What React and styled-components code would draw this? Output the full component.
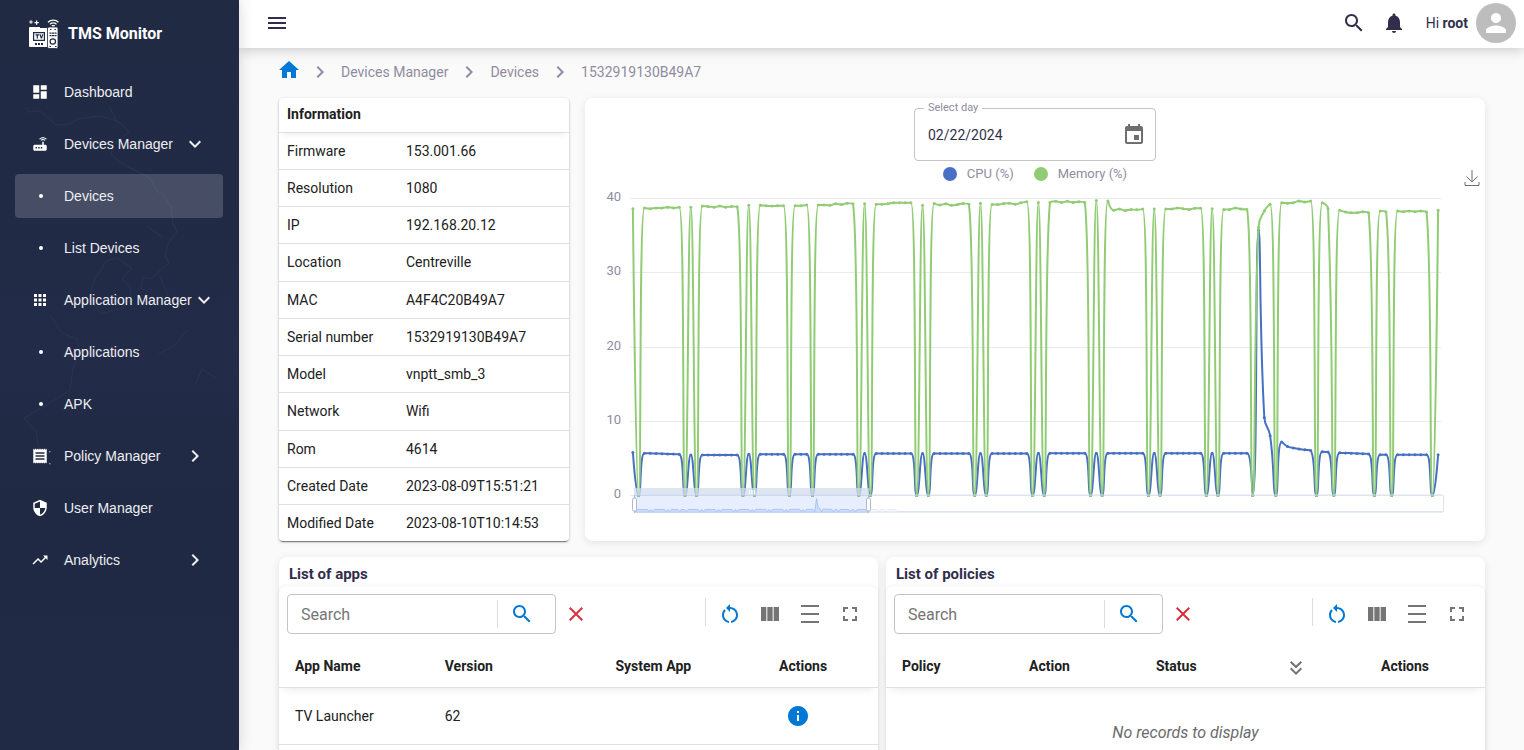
import React from "react";
import styled, { createGlobalStyle } from "styled-components";

const GlobalStyle = createGlobalStyle`
  *, *::before, *::after { box-sizing: border-box; }
  body { margin: 0; background: #fafafa; color: #212121; font: 14px/20px Roboto, "Liberation Sans", sans-serif; }
  button, input { font: inherit; color: inherit; }
  a { color: inherit; text-decoration: none; }
`;

/* ---------- icons ---------- */

const PATHS = {
  menu: "M3 18h18v-2H3v2zm0-5h18v-2H3v2zm0-7v2h18V6H3z",
  search:
    "M15.5 14h-.79l-.28-.27C15.41 12.59 16 11.11 16 9.5 16 5.91 13.09 3 9.5 3S3 5.91 3 9.5 5.91 16 9.5 16c1.61 0 3.09-.59 4.23-1.57l.27.28v.79l5 4.99L20.49 19l-4.99-5zm-6 0C7.01 14 5 11.99 5 9.5S7.01 5 9.5 5 14 7.01 14 9.5 11.99 14 9.5 14z",
  bell: "M12 22c1.1 0 2-.9 2-2h-4c0 1.1.89 2 2 2zm6-6v-5c0-3.07-1.64-5.64-4.5-6.32V4c0-.83-.67-1.5-1.5-1.5s-1.5.67-1.5 1.5v.68C7.63 5.36 6 7.92 6 11v5l-2 2v1h16v-1l-2-2z",
  person:
    "M12 12c2.21 0 4-1.79 4-4s-1.79-4-4-4-4 1.79-4 4 1.79 4 4 4zm0 2c-2.67 0-8 1.34-8 4v2h16v-2c0-2.66-5.33-4-8-4z",
  home: "M10 20v-6h4v6h5v-8h3L12 3 2 12h3v8z",
  chevronRight: "M10 6 8.59 7.41 13.17 12l-4.58 4.59L10 18l6-6z",
  chevronDown: "M16.59 8.59 12 13.17 7.41 8.59 6 10l6 6 6-6z",
  dashboard: "M3 13h8V3H3v10zm0 8h8v-6H3v6zm10 0h8V11h-8v10zm0-18v6h8V3h-8z",
  router:
    "M20.2 5.9l.8-.8C19.6 3.7 17.8 3 16 3s-3.6.7-5 2.1l.8.8C13 4.8 14.5 4.2 16 4.2s3 .6 4.2 1.7zm-.9.8c-.9-.9-2.1-1.4-3.3-1.4s-2.4.5-3.3 1.4l.8.8c.7-.7 1.6-1 2.5-1s1.8.3 2.5 1l.8-.8zM19 13h-2V9h-2v4H5c-1.1 0-2 .9-2 2v4c0 1.1.9 2 2 2h14c1.1 0 2-.9 2-2v-4c0-1.1-.9-2-2-2zM8 18H6v-2h2v2zm3.5 0h-2v-2h2v2zm3.5 0h-2v-2h2v2z",
  apps: "M4 8h4V4H4v4zm6 12h4v-4h-4v4zm-6 0h4v-4H4v4zm0-6h4v-4H4v4zm6 0h4v-4h-4v4zm6-10v4h4V4h-4zm-6 4h4V4h-4v4zm6 6h4v-4h-4v4zm0 6h4v-4h-4v4z",
  receipt:
    "M18 17H6v-2h12v2zm0-4H6v-2h12v2zm0-4H6V7h12v2zM3 22l1.5-1.5L6 22l1.5-1.5L9 22l1.5-1.5L12 22l1.5-1.5L15 22l1.5-1.5L18 22l1.5-1.5L21 22V2l-1.5 1.5L18 2l-1.5 1.5L15 2l-1.5 1.5L12 2l-1.5 1.5L9 2 7.5 3.5 6 2 4.5 3.5 3 2v20zM24.500 7h1.300v-1.300h-1.300zM24.500 23h1.300v-1.300h-1.300z",
  shield:
    "M12 1L3 5v6c0 5.55 3.84 10.74 9 12 5.16-1.26 9-6.45 9-12V5l-9-4zm0 10.990h7c-.53 4.120-3.280 7.790-7 8.940V12H5V6.300l7-3.110v8.800z",
  trending: "M16 6l2.290 2.290-4.880 4.880-4-4L2 16.590 3.410 18l6-6 4 4 6.300-6.290L22 12V6z",
  event:
    "M17 12h-5v5h5v-5zM16 1v2H8V1H6v2H5c-1.110 0-1.990.9-1.990 2L3 19c0 1.100.89 2 2 2h14c1.100 0 2-.9 2-2V5c0-1.100-.9-2-2-2h-1V1h-2zm3 18H5V8h14v11z",
  close: "M19 6.410 17.590 5 12 10.590 6.410 5 5 6.410 10.590 12 5 17.590 6.410 19 12 13.410 17.590 19 19 17.590 13.410 12z",
  restart:
    "M12 5V2L8 6l4 4V7c3.310 0 6 2.690 6 6 0 2.970-2.170 5.430-5 5.910v2.020c3.950-.49 7-3.850 7-7.930 0-4.420-3.580-8-8-8zm-6 8c0-1.650.67-3.150 1.760-4.240L6.340 7.340C4.900 8.790 4 10.790 4 13c0 4.080 3.050 7.440 7 7.930v-2.020c-2.830-.48-5-2.940-5-5.910z",
  columns: "M14.670 5v14H9.330V5h5.340zm1 14H21V5h-5.330v14zm-7.340 0V5H3v14h5.330z",
  density: "M3 3h18v2H3zm0 16h18v2H3zm0-8h18v2H3z",
  fullscreen: "M7 14H5v5h5v-2H7v-3zm-2-4h2V7h3V5H5v5zm12 7h-3v2h5v-5h-2v3zM14 5v2h3v3h2V5h-5z",
  doubleDown: "M18 6.410 16.590 5 12 9.580 7.410 5 6 6.410l6 6zM18 13l-1.410-1.410L12 16.170l-4.590-4.580L6 13l6 6z",
  info: "M12 2C6.480 2 2 6.480 2 12s4.480 10 10 10 10-4.480 10-10S17.520 2 12 2zm1 15h-2v-6h2v6zm0-8h-2V7h2v2z",
};

const Glyph = styled.svg`
  display: block;
  flex: none;
  fill: currentColor;
  overflow: visible;
`;

const Icon = ({ name, size = 24 }) => (
  <Glyph width={size} height={size} viewBox="0 0 24 24" aria-hidden="true">
    <path d={PATHS[name]} />
  </Glyph>
);

const Logo = () => (
  <Glyph width="32" height="32" viewBox="0 0 32 32" aria-hidden="true">
    <circle cx="3" cy="4" r="1.700" opacity=".75" />
    <path d="M8 2.500h1.200V4h1.500v1.200H9.200v1.500H8V5.200H6.500V4H8z" />
    <path d="M2 9h18.500v20H2a1 1 0 0 1-1-1V10a1 1 0 0 1 1-1z" />
    <g fill="none" stroke="#fff">
      <path d="M20 4.200c3-2.800 7.500-2.800 10.500 0M22 6.200c2-1.600 4.500-1.600 6.500 0" strokeWidth="1.300" />
    </g>
    <path d="M23.800 7h3v1.500h-3z" />
    <g fill="#202a44">
      <path d="M12 9h7v1h-7zM19 8h2v4h-2z" />
      <path d="M5 14h12v9H5zm1.200 1.200v6.600h9.600v-6.600z" fillRule="evenodd" />
      <path d="M7.500 16.300h3.600v1.200H9.900v3H8.700v-3H7.500zM11.400 16.300h1.300l.7 2.500.7-2.500h1.300l-1.400 4.200h-1.200zM7 25h2v2H7zM10 25h2v2h-2zM13 25h2v2h-2z" />
    </g>
    <rect x="19.500" y="9" width="10.500" height="21.500" rx="1.500" stroke="#202a44" strokeWidth=".8" />
    <g fill="#202a44">
      <path d="M22 11h1.500v1H22zM26.500 11H28v1h-1.500zM21.500 14.500h2v1.300h-2zM24 14.500h2v1.300h-2zM26.500 14.500h2v1.300h-2zM21.500 17h2v1.300h-2zM24 17h2v1.300h-2zM26.500 17h2v1.300h-2zM21.500 28h1.500v1h-1.500zM27 28h1.500v1H27z" />
    </g>
    <circle cx="24.800" cy="23.500" r="2.700" fill="none" stroke="#202a44" strokeWidth="1.200" />
  </Glyph>
);

/* ---------- shell ---------- */

const Shell = styled.div`
  display: flex;
  height: 100vh;
  overflow: hidden;
`;

const Sidebar = styled.aside`
  position: relative;
  z-index: 3;
  flex: none;
  width: 239px;
  padding-top: 13px;
  background: linear-gradient(#202a43, #222b47 48%, #1f2943 70%, #202a44);
  color: #eeeef2;
  box-shadow: 0 0 14px rgba(0, 0, 0, 0.16);
  font-family: "Liberation Sans", Arial, sans-serif;
`;

const MapArt = styled.svg`
  position: absolute;
  inset: 0;
  width: 100%;
  height: 100%;
  fill: none;
  stroke: #38486a;
  stroke-opacity: 0.32;
  pointer-events: none;
`;

const Brand = styled.a`
  position: relative;
  display: flex;
  align-items: center;
  gap: 8px;
  height: 41px;
  padding-left: 28px;
  margin-bottom: 16px;
  color: #fff;
  font: bold 16px/20px Roboto, sans-serif;
`;

const Nav = styled.nav`
  position: relative;
  display: flex;
  flex-direction: column;
  gap: 8px;
  padding: 0 16px 0 15px;
`;

const NavLink = styled.a`
  display: flex;
  align-items: center;
  height: 44px;
  padding-left: 16px;
  border-radius: 4px;
  white-space: nowrap;
  background: ${(p) => (p.$active ? "rgba(255, 255, 255, 0.17)" : "transparent")};
`;

const NavIcon = styled.span`
  display: flex;
  width: 18px;
  margin-right: 15px;
  justify-content: center;
  color: #fff;
`;

const Dot = styled.i`
  width: 4px;
  height: 4px;
  margin-left: 2px;
  border-radius: 50%;
  background: #fff;
`;

const NavText = styled.span`
  min-width: 119px;
`;

const Main = styled.div`
  display: flex;
  flex: 1;
  flex-direction: column;
  min-width: 0;
`;

const TopBar = styled.header`
  position: relative;
  z-index: 2;
  display: flex;
  flex: none;
  align-items: center;
  height: 48px;
  padding: 0 8px 2px 26px;
  background: #fff;
  color: #312e4b;
  box-shadow: 0 2px 12px rgba(0, 0, 0, 0.2);
`;

const IconButton = styled.button`
  display: flex;
  align-items: center;
  justify-content: center;
  flex: none;
  width: ${(p) => p.$w || 40}px;
  height: ${(p) => p.$h || 40}px;
  padding: 0;
  border: 0;
  background: none;
  color: ${(p) => p.$color || "inherit"};
  cursor: pointer;
`;

const Account = styled.div`
  display: flex;
  align-items: center;
  gap: 8px;
  margin-left: 12px;
`;

const Avatar = styled.span`
  display: flex;
  align-items: center;
  justify-content: center;
  width: 40px;
  height: 40px;
  border-radius: 50%;
  background: #bdbdbd;
  color: #fff;
`;

const Spacer = styled.div`
  flex: 1;
`;

const Content = styled.main`
  flex: 1;
  min-height: 0;
  overflow-y: auto;
  scrollbar-width: none;
  padding: 0 39px 16px 40px;
`;

const Crumbs = styled.nav`
  display: flex;
  align-items: center;
  gap: 9px;
  height: 50px;
  padding-bottom: 2px;
  color: #8f8c9f;
`;

const HomeLink = styled.a`
  width: 20px;
  padding-bottom: 4px;
  display: flex;
  justify-content: center;
  color: #0078d4;
`;

/* ---------- cards ---------- */

const Overview = styled.section`
  display: grid;
  grid-template-columns: 290px minmax(0, 1fr);
  gap: 16px;
  margin-bottom: 16px;
`;

const InfoCard = styled.div`
  border-radius: 4px;
  background: #fff;
  box-shadow: 0 2px 1px -1px rgba(0, 0, 0, 0.4), 0 1px 3px rgba(0, 0, 0, 0.28);
`;

const InfoTable = styled.table`
  width: 100%;
  height: 100%;
  border-collapse: collapse;
  text-align: left;

  th, td { padding: 0 8px; font-weight: 400; border-bottom: 1px solid #e0e0e0; }
  thead tr { height: 34px; box-shadow: 0 6px 6px -4px rgba(0, 0, 0, 0.09); }
  thead th { font-weight: 700; padding-bottom: 1px; }
  tbody th { width: 41%; }
  tbody tr:last-child > * { border-bottom: 0; }
`;

const Card = styled.div`
  border-radius: 8px;
  background: #fff;
  box-shadow: 0 2px 8px rgba(0, 0, 0, 0.09);
`;

const ChartCard = styled(Card)`
  padding-top: 4px;
`;

const DayField = styled.fieldset`
  display: flex;
  width: 242px;
  height: 59px;
  margin: 0 auto;
  padding: 0 1px 2px 9px;
  border: 1px solid #c4c4c4;
  border-radius: 4px;
`;

const DayLegend = styled.legend`
  padding: 0 4px;
  color: #8f8c9f;
  font-size: 11px;
  line-height: 12px;
`;

const DayRow = styled.div`
  display: flex;
  align-items: center;
  width: 100%;
  height: 40px;
  padding-top: 2px;
`;

const DayInput = styled.input`
  flex: 1;
  min-width: 0;
  padding: 0 4px;
  border: 0;
  outline: 0;
  background: none;
  color: #312e4b;
`;

const ChartBar = styled.div`
  display: grid;
  grid-template-columns: 1fr auto 1fr;
  height: 26px;
`;

const Series = styled.ul`
  grid-column: 2;
  display: flex;
  align-items: center;
  gap: 20px;
  margin: 0;
  padding: 0;
  list-style: none;
  color: #8f8c9f;
  font-size: 13px;
`;

const SeriesItem = styled.li`
  display: flex;
  align-items: center;
  gap: 10px;

  &::before {
    content: "";
    width: 14px;
    height: 14px;
    border-radius: 50%;
    background: ${(p) => p.$color};
  }
`;

const SaveSlot = styled.div`
  display: flex;
  justify-content: flex-end;
  align-items: flex-end;
  padding-right: 4px;
`;

const ChartSvg = styled.svg`
  display: block;
  width: 100%;
  height: auto;
  font-family: Roboto, sans-serif;
`;

/* ---------- chart data ---------- */

const DROPS = [1, 9, 11, 19, 21, 27, 31, 39, 41, 49, 51, 59, 61, 69, 71, 79, 81, 89, 91, 99, 101, 107, 111, 118, 121, 128, 131, 138];

const MEMORY_RUNS = [
  [38.6], [38.7, 38.6, 38.7, 38.7, 38.8, 38.7, 38.8], [38.8],
  [38.95, 38.9, 38.8, 38.95, 38.8, 38.9, 38.85], [39.05],
  [39.05, 39, 38.95, 39, 39], [39, 39, 39.1],
  [39.1, 39.1, 39.05, 39.25, 39.15, 39.35, 39.25], [39.25],
  [39.2, 39.2, 39.25, 39.4, 39.4, 39.4, 39.4], [39.05],
  [39.3, 39.1, 39.25, 39.05, 39.15, 39.3, 39.2], [39.35],
  [39.15, 39.15, 39.3, 39.35, 39.2, 39.4, 39.55], [39.45],
  [39.45, 39.6, 39.45, 39.6, 39.45, 39.55, 39.45], [39.7],
  [39.65, 38.4, 38.55, 38.35, 38.5, 38.45, 38.55], [38.55],
  [38.55, 38.55, 38.7, 38.6, 38.5, 38.65, 38.65], [38.6],
  [38.5, 38.5, 38.7, 38.55, 38.5], [36.1, 38.3, 39.2],
  [39.4, 39.35, 39.4, 39.65, 39.5, 39.65], [39.4, 38.6],
  [38.4, 38.15, 38.05, 38.05, 38.2, 38.05], [38.3, 38.2],
  [38.3, 38.2, 38.3, 38.2, 38.3, 38.15], [38.4],
];

const CPU_EVENTS = { 0: 5.8, 108: 35.7, 109: 10.5, 110: 8.05, 112: 7.2, 113: 6.6, 114: 6.4, 115: 6.25, 116: 6.15, 117: 6.05, 119: 5.9, 120: 5.85 };

const MEMORY = MEMORY_RUNS.flatMap((run, i) => (i < DROPS.length ? [...run, 0] : run));

const cpuBase = (i) => {
  if (i < 9) return 5.75 - i * 0.025;
  if (i < 20) return 5.45;
  if (i < 40) return 5.55;
  if (i < 70) return 5.65;
  if (i < 122) return 5.7;
  if (i < 128) return 5.75 - (i - 122) * 0.03;
  return 5.5;
};

const CPU = MEMORY.map((m, i) => (m === 0 ? 0 : CPU_EVENTS[i] ?? cpuBase(i)));

const STEP = 811 / 140;
const BASE = 308.5;
const toPoint = (v, i) => [45 + STEP * (i + 0.5), BASE - v * 7.43];

const clamp = (v, a, b) => Math.max(Math.min(v, Math.max(a, b)), Math.min(a, b));

/* Bezier smoothing whose control points never leave the range of their segment. */
const smoothPath = (pts) => {
  let d = `M${pts[0][0]} ${pts[0][1]}`;
  let [c0x, c0y] = pts[0];
  for (let i = 1; i < pts.length; i += 1) {
    const [px, py] = pts[i - 1];
    const [x, y] = pts[i];
    let c1x = x;
    let c1y = y;
    let n0x = x;
    let n0y = y;
    if (i < pts.length - 1) {
      const [nx, ny] = pts[i + 1];
      const lenPrev = Math.hypot(x - px, y - py);
      const lenNext = Math.hypot(nx - x, ny - y);
      const ratio = lenNext / (lenNext + lenPrev);
      n0x = clamp(x + (nx - px) * 0.5 * ratio, nx, x);
      n0y = clamp(y + (ny - py) * 0.5 * ratio, ny, y);
      c1x = clamp(x - ((n0x - x) * lenPrev) / lenNext, px, x);
      c1y = clamp(y - ((n0y - y) * lenPrev) / lenNext, py, y);
      n0x = x + ((x - c1x) * lenNext) / lenPrev;
      n0y = y + ((y - c1y) * lenNext) / lenPrev;
    }
    d += `C${[c0x, c0y, c1x, c1y, x, y].map((n) => n.toFixed(2)).join(" ")}`;
    c0x = n0x;
    c0y = n0y;
  }
  return d;
};

const OVERVIEW = [...CPU, ...CPU.slice(22, 38)]
  .map((v, i) => `L${(49 + i * 1.69).toFixed(1)} ${(324.5 - v * 0.36).toFixed(1)}`)
  .join("");
const OVERVIEW_LINE = `M49 322.5${OVERVIEW}L313 324.500L858 324.5`;

const Line = ({ values, color }) => {
  const pts = values.map(toPoint);
  return (
    <g>
      <path d={smoothPath(pts)} fill="none" stroke={color} strokeWidth="2" strokeLinejoin="bevel" />
      {pts.map(([x, y], i) => (
        <circle key={i} cx={x} cy={y} r="1.500" fill={color} />
      ))}
    </g>
  );
};

const Handle = ({ x }) => (
  <g stroke="#acb8d1">
    <path d={`M${x} 308v18`} />
    <rect x={x - 2} y="311" width="4" height="13" rx="1.500" fill="#fff" />
  </g>
);

const UsageChart = () => (
  <ChartSvg viewBox="0 0 900 354" role="img" aria-label="CPU and memory usage">
    {[0, 10, 20, 30, 40].map((v) => {
      const y = Math.floor(BASE - v * 7.43 + 0.2);
      return (
        <g key={v}>
          <path d={`M45 ${y + 0.5}H856`} stroke="#e8eaee" />
          <text x="36" y={y + 3} textAnchor="end" fontSize="13" fill="#8f8c9f">{v}</text>
        </g>
      );
    })}
    <Line values={CPU} color="#4770c4" />
    <Line values={MEMORY} color="#91cc75" />
    <path d={`${OVERVIEW_LINE}V326H49Z`} fill="#d2dbee" fillOpacity=".2" />
    <path d={OVERVIEW_LINE} fill="none" stroke="#d2dbee" strokeWidth=".5" />
    <rect x="49.500" y="308" width="809" height="17" rx="1" fill="none" stroke="#d2dbee" strokeOpacity=".8" />
    <rect x="49" y="308" width="235" height="18" fill="#87afff" fillOpacity=".2" />
    <clipPath id="window"><rect x="49" y="300" width="235" height="26" /></clipPath>
    <g clipPath="url(#window)">
      <path d={`${OVERVIEW_LINE}V326H49Z`} fill="#8fb0f7" fillOpacity=".2" />
      <path d={OVERVIEW_LINE} fill="none" stroke="#8fb0f7" strokeWidth=".5" />
    </g>
    <rect x="49" y="301" width="235" height="7" fill="#d2dbee" fillOpacity=".75" />
    <path d="M164.500 303v4M167 303v4M169.500 303v4" stroke="#fff" strokeWidth="1.300" />
    <Handle x={49.5} />
    <Handle x={283.5} />
  </ChartSvg>
);

/* ---------- lists ---------- */

const Lists = styled.section`
  display: grid;
  grid-template-columns: repeat(2, minmax(0, 1fr));
  gap: 8px;
`;

const PanelTitle = styled.h2`
  height: 29px;
  margin: 0;
  padding: 7px 10px 0;
  color: #312e4b;
  font-size: 15px;
  line-height: 20px;
`;

const PanelBody = styled.div`
  min-height: 220px;
  border-radius: 8px;
  background: #fff;
  box-shadow: 0 0 4px rgba(0, 0, 0, 0.08);
`;

const Toolbar = styled.div`
  display: flex;
  align-items: center;
  padding: 8px 8px 0;
`;

const SearchBox = styled.div`
  display: flex;
  align-items: center;
  width: 269px;
  height: 40px;
  border: 1px solid #c4c4c4;
  border-radius: 4px;
`;

const SearchInput = styled.input`
  flex: 1;
  min-width: 0;
  padding: 2px 13px 0;
  border: 0;
  outline: 0;
  background: none;
  font-size: 16px;

  &::placeholder { color: #757575; opacity: 1; }
`;

const Rule = styled.i`
  width: 1px;
  height: 28px;
  background: #dcdcdc;
`;

const SearchGo = styled.div`
  width: 57px;
  display: flex;
  padding-left: 4px;
`;

const Tools = styled.div`
  display: flex;
  align-items: center;
  color: #757575;
`;

const RuleSlot = styled.span`
  display: flex;
  padding: 0 4px 4px 0;
`;

const DataTable = styled.table`
  width: 100%;
  margin-top: 11px;
  table-layout: fixed;
  border-collapse: collapse;
`;

const HeadRow = styled.tr`
  height: 42px;
  box-shadow: 0 8px 8px -6px rgba(0, 0, 0, 0.1);
`;

const HeadCell = styled.th`
  width: ${(p) => p.$w};
  padding: ${(p) => (p.$center ? "0" : "0 0 0 16px")};
  border-bottom: 1px solid #e0e0e0;
  text-align: ${(p) => (p.$center ? "center" : "left")};
`;

const Cell = styled.td`
  height: 57px;
  padding: ${(p) => (p.$center ? "0 10px 0 0" : "0 0 0 16px")};
  border-bottom: 1px solid #e0e0e0;
`;

const Centered = styled.div`
  display: flex;
  justify-content: center;
  padding-top: ${(p) => p.$top || 0}px;
  color: #757575;
`;

const Empty = styled.td`
  height: 92px;
  color: #6b6b6b;
  font-size: 16px;
  font-style: italic;
  text-align: center;
`;

const Panel = ({ title, children }) => (
  <Card>
    <PanelTitle>{title}</PanelTitle>
    <PanelBody>
      <Toolbar>
        <SearchBox>
          <SearchInput type="text" placeholder="Search" aria-label={`Search ${title}`} />
          <Rule />
          <SearchGo>
            <IconButton $color="#0078d4" aria-label="Search"><Icon name="search" /></IconButton>
          </SearchGo>
        </SearchBox>
        <IconButton $color="#dc2f3c" aria-label="Clear search"><Icon name="close" /></IconButton>
        <Spacer />
        <Tools>
          <RuleSlot><Rule /></RuleSlot>
          <IconButton $color="#0078d4" aria-label="Reload"><Icon name="restart" /></IconButton>
          <IconButton aria-label="Columns"><Icon name="columns" /></IconButton>
          <IconButton aria-label="Density"><Icon name="density" /></IconButton>
          <IconButton aria-label="Full screen"><Icon name="fullscreen" /></IconButton>
        </Tools>
      </Toolbar>
      {children}
    </PanelBody>
  </Card>
);

/* ---------- page ---------- */

const NAV = [
  { label: "Dashboard", icon: "dashboard" },
  { label: "Devices Manager", icon: "router", chevron: "chevronDown" },
  { label: "Devices", active: true },
  { label: "List Devices" },
  { label: "Application Manager", icon: "apps", chevron: "chevronDown" },
  { label: "Applications" },
  { label: "APK" },
  { label: "Policy Manager", icon: "receipt", chevron: "chevronRight" },
  { label: "User Manager", icon: "shield" },
  { label: "Analytics", icon: "trending", chevron: "chevronRight" },
];

const INFO = [
  ["Firmware", "153.001.66"],
  ["Resolution", "1080"],
  ["IP", "192.168.20.12"],
  ["Location", "Centreville"],
  ["MAC", "A4F4C20B49A7"],
  ["Serial number", "1532919130B49A7"],
  ["Model", "vnptt_smb_3"],
  ["Network", "Wifi"],
  ["Rom", "4614"],
  ["Created Date", "2023-08-09T15:51:21"],
  ["Modified Date", "2023-08-10T10:14:53"],
];

export default function App() {
  return (
    <Shell>
      <GlobalStyle />
      <Sidebar>
        <MapArt viewBox="0 0 239 750" preserveAspectRatio="xMidYMin slice" aria-hidden="true">
          <path d="M25 107l4 5 11-1 9 7 7 7 14-1 8-5 22-3 14 4 9 5 6 7-6 5-9 7-3 10 12 10 15 8 12 6 6 12 8 6 7 11 2 16 4 9-9 12-3 12 4 7-9 8-10 8-7-2-2 12M132 268l-9-6-7-4-10 3-5 9-7 10-3 12 3 12 8 10 9-3 12-3 8-9-1-13-8-7z" />
          <path d="M50 315l12 18 15 6 3 12-7 17-3 22-12 8-34 20 12 13 3 18M109 106l8 16M147 226l16 12M160 276l8 20M195 385l7-16 14 9M158 354l16-8 14-16" />
        </MapArt>
        <Brand href="#home">
          <Logo />
          TMS Monitor
        </Brand>
        <Nav aria-label="Main">
          {NAV.map((item) => (
            <NavLink key={item.label} href="#nav" $active={item.active}>
              <NavIcon>{item.icon ? <Icon name={item.icon} size={18} /> : <Dot />}</NavIcon>
              <NavText>{item.label}</NavText>
              {item.chevron && <Icon name={item.chevron} />}
            </NavLink>
          ))}
        </Nav>
      </Sidebar>
      <Main>
        <TopBar>
          <IconButton $w={24} aria-label="Toggle menu"><Icon name="menu" /></IconButton>
          <Spacer />
          <IconButton aria-label="Search"><Icon name="search" /></IconButton>
          <IconButton aria-label="Notifications"><Icon name="bell" /></IconButton>
          <Account>
            <span>Hi <b>root</b></span>
            <Avatar><Icon name="person" size={30} /></Avatar>
          </Account>
        </TopBar>
        <Content>
          <Crumbs aria-label="Breadcrumb">
            <HomeLink href="#home" aria-label="Home"><Icon name="home" /></HomeLink>
            <Icon name="chevronRight" />
            <a href="#manager">Devices Manager</a>
            <Icon name="chevronRight" />
            <a href="#devices">Devices</a>
            <Icon name="chevronRight" />
            <span>1532919130B49A7</span>
          </Crumbs>
          <Overview>
            <InfoCard>
              <InfoTable>
                <thead>
                  <tr><th colSpan={2}>Information</th></tr>
                </thead>
                <tbody>
                  {INFO.map(([name, value]) => (
                    <tr key={name}>
                      <th scope="row">{name}</th>
                      <td>{value}</td>
                    </tr>
                  ))}
                </tbody>
              </InfoTable>
            </InfoCard>
            <ChartCard>
              <DayField>
                <DayLegend>Select day</DayLegend>
                <DayRow>
                  <DayInput type="text" defaultValue="02/22/2024" aria-label="Select day" />
                  <IconButton $color="#6f6f6f" aria-label="Choose date"><Icon name="event" /></IconButton>
                </DayRow>
              </DayField>
              <ChartBar>
                <Series>
                  <SeriesItem $color="#4770c4">CPU (%)</SeriesItem>
                  <SeriesItem $color="#91cc75">Memory (%)</SeriesItem>
                </Series>
                <SaveSlot>
                  <IconButton $w={18} $h={18} aria-label="Save as image">
                    <svg width="18" height="18" viewBox="0 0 18 18" fill="none" stroke="#6e6e76" aria-hidden="true">
                      <path d="M9 1v12M3.500 7.500L9 13l5.500-5.500M2 13v3.500h14V13" />
                    </svg>
                  </IconButton>
                </SaveSlot>
              </ChartBar>
              <UsageChart />
            </ChartCard>
          </Overview>
          <Lists>
            <Panel title="List of apps">
              <DataTable>
                <thead>
                  <HeadRow>
                    <HeadCell $w="25%">App Name</HeadCell>
                    <HeadCell $w="28.500%">Version</HeadCell>
                    <HeadCell $w="21.500%">System App</HeadCell>
                    <HeadCell $w="25%" $center>Actions</HeadCell>
                  </HeadRow>
                </thead>
                <tbody>
                  <tr>
                    <Cell>TV Launcher</Cell>
                    <Cell>62</Cell>
                    <Cell />
                    <Cell $center>
                      <Centered>
                        <IconButton $color="#0078d4" aria-label="App details"><Icon name="info" /></IconButton>
                      </Centered>
                    </Cell>
                  </tr>
                </tbody>
              </DataTable>
            </Panel>
            <Panel title="List of policies">
              <DataTable>
                <thead>
                  <HeadRow>
                    <HeadCell $w="21.200%">Policy</HeadCell>
                    <HeadCell $w="21.200%">Action</HeadCell>
                    <HeadCell $w="21.200%">Status</HeadCell>
                    <HeadCell $w="9.700%" $center>
                      <Centered $top={4}>
                        <IconButton $w={24} $h={24} aria-label="Expand all"><Icon name="doubleDown" /></IconButton>
                      </Centered>
                    </HeadCell>
                    <HeadCell $center>Actions</HeadCell>
                  </HeadRow>
                </thead>
                <tbody>
                  <tr><Empty colSpan={5}>No records to display</Empty></tr>
                </tbody>
              </DataTable>
            </Panel>
          </Lists>
        </Content>
      </Main>
    </Shell>
  );
}
